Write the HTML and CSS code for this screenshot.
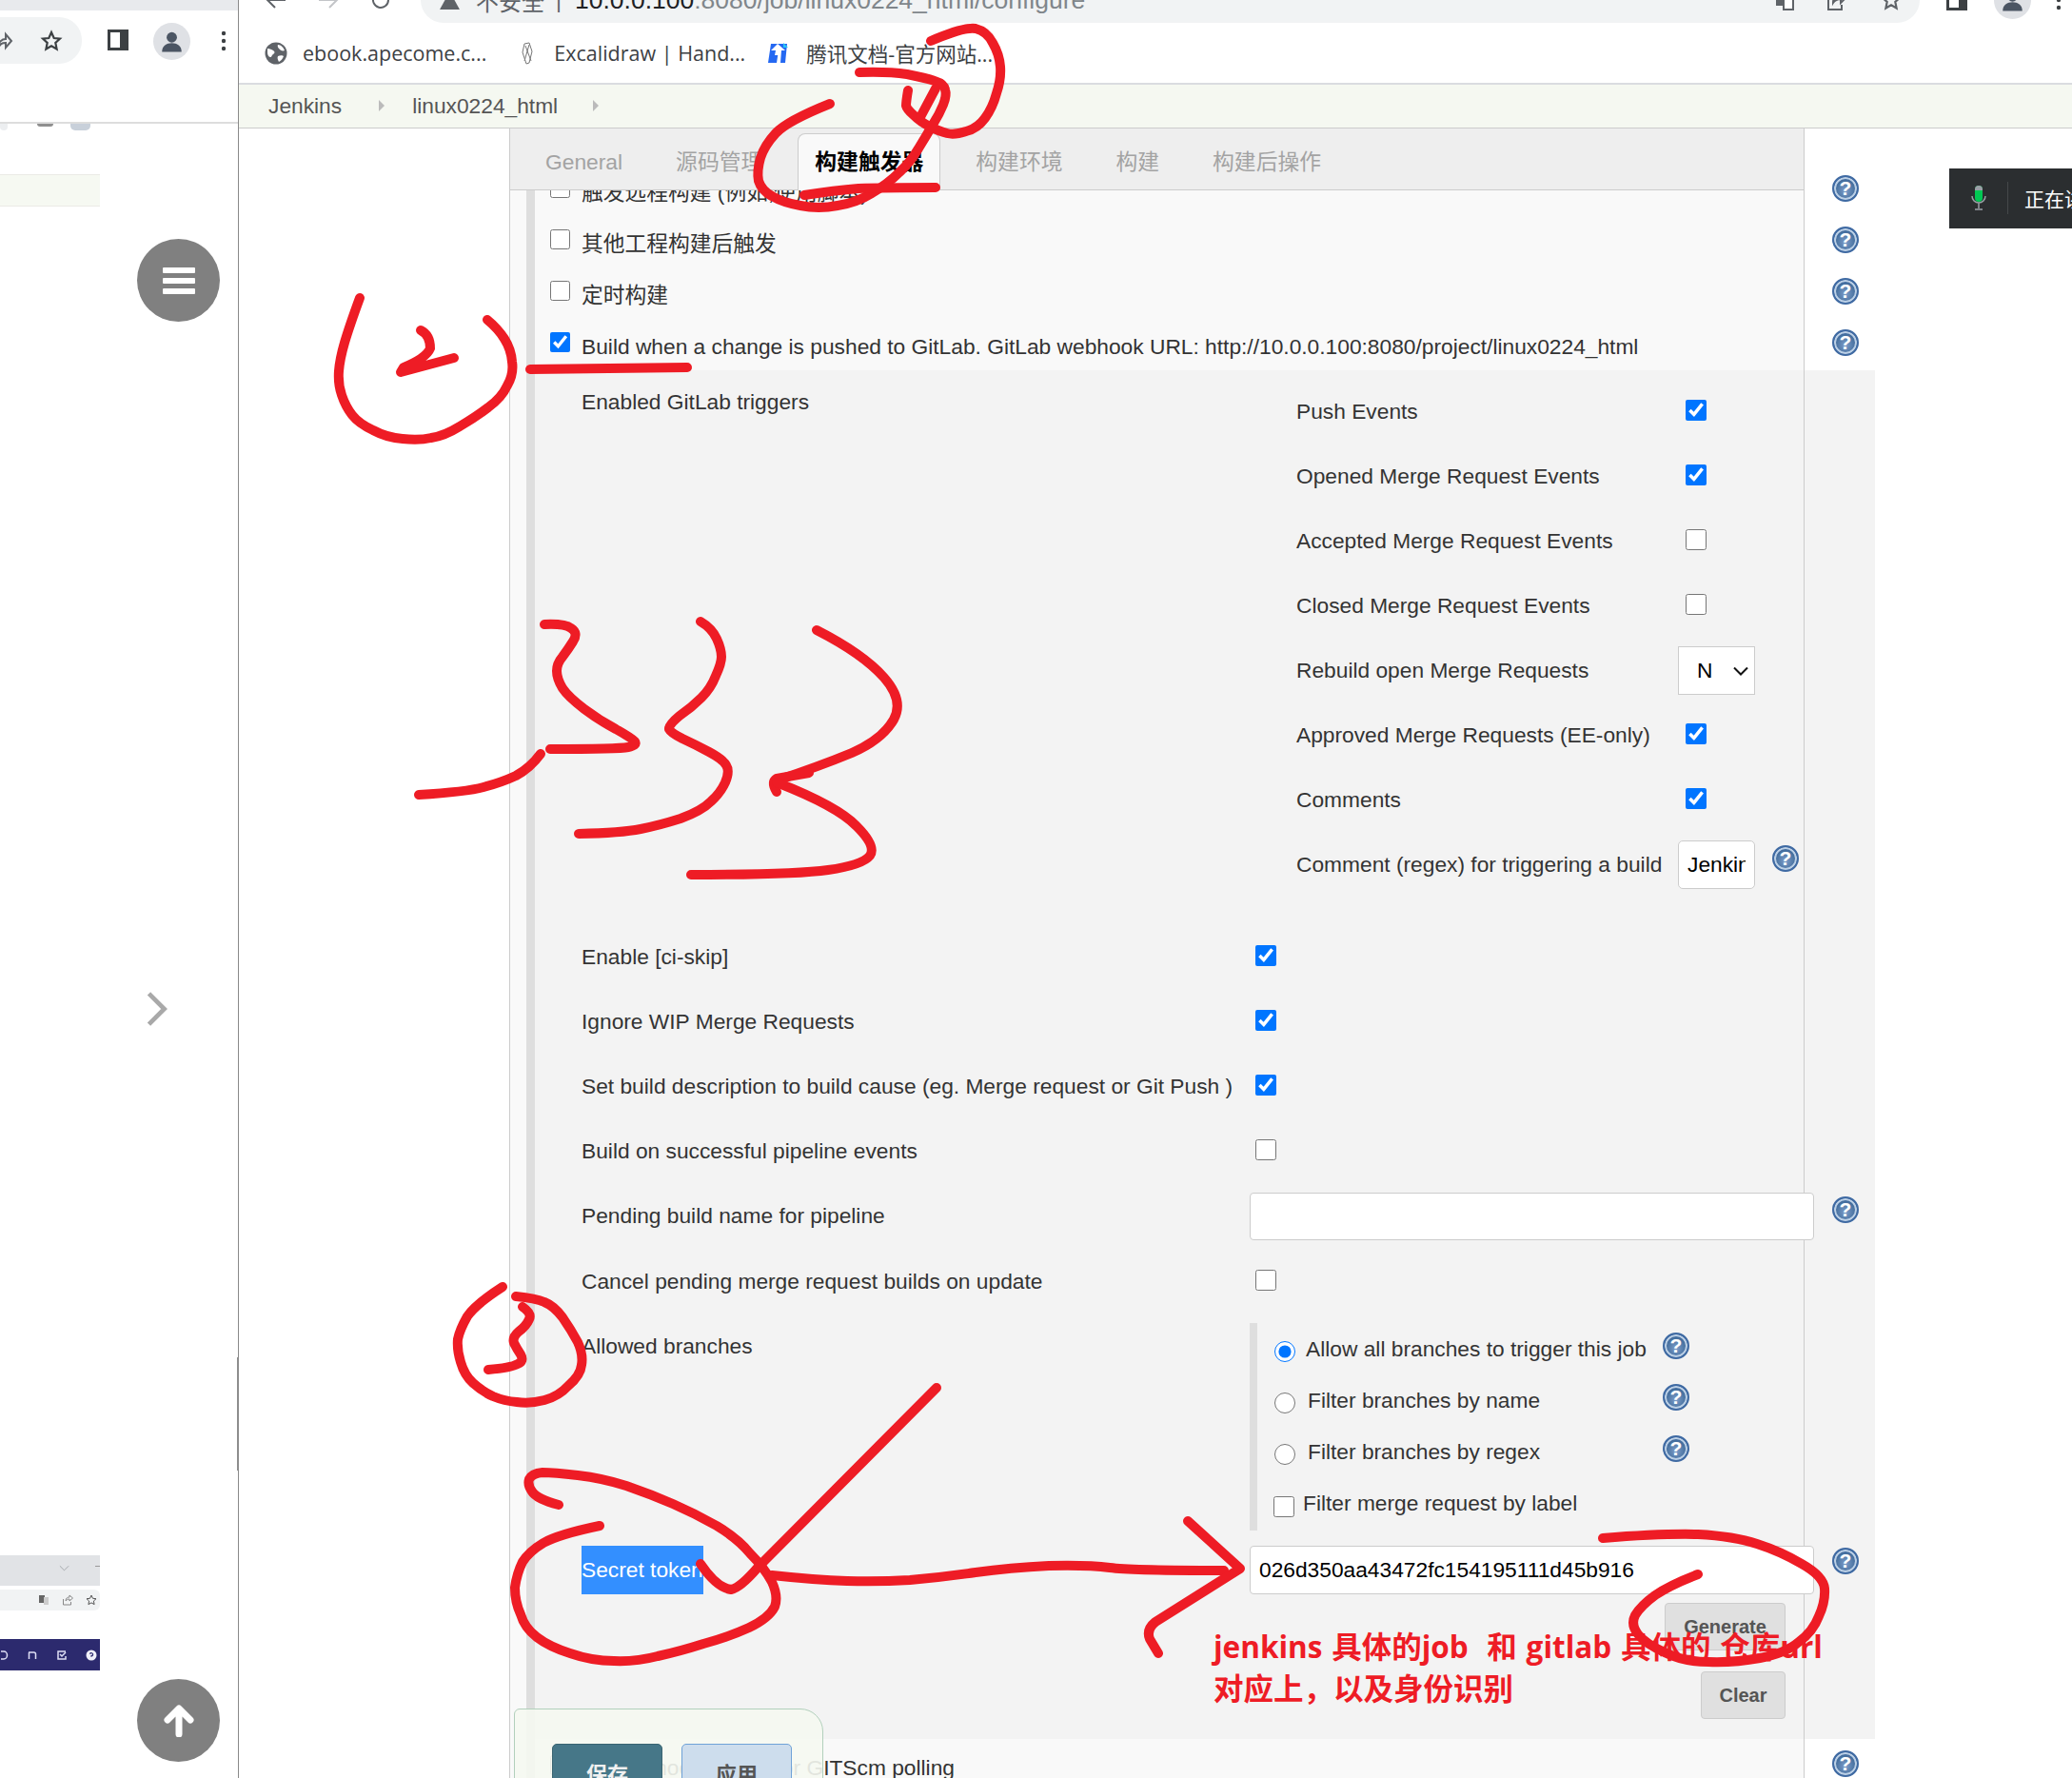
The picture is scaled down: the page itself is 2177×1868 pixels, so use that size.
FILE: index.html
```html
<!DOCTYPE html>
<html lang="zh-CN">
<head>
<meta charset="utf-8">
<title>linux0224_html Config [Jenkins]</title>
<link rel="stylesheet" href="styles.css">
</head>
<body>
<div class="page">
  <aside class="side">
    <div class="side-tabs"></div>
    <div class="side-toolbar">
      <div class="side-pill">
        <svg class="ico" viewBox="0 0 24 24"><path d="M10 20c0-7 4-10 8-10V5l6 7-6 7v-5c-4 0-6 1-8 6z" fill="none" stroke="#5f6368" stroke-width="2"/></svg>
        <svg class="ico" viewBox="0 0 24 24"><path d="M12 3l2.7 6 6.3.7-4.700 4.300 1.300 6.500L12 17.200 6.400 20.500l1.300-6.500L3 9.700 9.300 9z" fill="none" stroke="#3c4043" stroke-width="2.200"/></svg>
      </div>
      <svg class="ico side-panel-ico" viewBox="0 0 24 24"><rect x="1" y="1" width="22" height="22" fill="#3c4043"/><rect x="4" y="4" width="10" height="16" fill="#fff"/></svg>
      <span class="avatar side-avatar"><svg viewBox="0 0 24 24"><circle cx="12" cy="8.500" r="4.500" fill="#4b5563"/><path d="M3.500 21c0-5 4-7.500 8.500-7.500s8.500 2.500 8.500 7.500z" fill="#4b5563"/></svg></span>
      <svg class="dots side-dots" viewBox="0 0 6 24"><circle cx="3" cy="4" r="2.200"/><circle cx="3" cy="12" r="2.200"/><circle cx="3" cy="20" r="2.200"/></svg>
    </div>
    <div class="side-chips"><i class="chip chip--a"></i><i class="chip chip--b"></i><i class="chip chip--c"></i></div>
    <div class="side-strip"></div>
    <div class="thumb-tabs"><svg class="thumb-chev" viewBox="0 0 12 8"><path d="M1 1l5 5 5-5" fill="none" stroke="#a0a4a8" stroke-width="1"/></svg><i class="thumb-dash"></i></div>
    <div class="thumb-omni">
      <svg class="mini" viewBox="0 0 12 12"><rect x="1" y="1" width="6" height="8" fill="#666"/><rect x="6" y="3" width="5" height="8" fill="#ccc"/></svg>
      <svg class="mini" viewBox="0 0 12 12"><path d="M1.500 5v6h8V8M4 7c0-3 2-4 4-4V1l3.500 3L8 7V5C6 5 5 6 4 7z" fill="none" stroke="#888" stroke-width="1"/></svg>
      <svg class="mini" viewBox="0 0 12 12"><path d="M6 1l1.500 3.300 3.500.4-2.600 2.400.7 3.500L6 8.900 2.900 10.600l.7-3.500L1 4.700l3.500-.4z" fill="none" stroke="#555" stroke-width="1"/></svg>
    </div>
    <div class="thumb-nav">
      <svg class="mini" viewBox="0 0 12 12"><path d="M4 2h3a3.500 4 0 0 1 0 8H4" fill="none" stroke="#dfe0f5" stroke-width="1.500"/></svg>
      <svg class="mini" viewBox="0 0 12 12"><path d="M2.500 3v7M9.500 10V5a2 2 0 0 0-2-2H2" fill="none" stroke="#dfe0f5" stroke-width="1.500"/></svg>
      <svg class="mini" viewBox="0 0 12 12"><path d="M10 2H2v8h8V7M4 5l2 2 4-4" fill="none" stroke="#dfe0f5" stroke-width="1.500"/></svg>
      <svg class="mini" viewBox="0 0 12 12"><circle cx="6" cy="6" r="5.500" fill="#f0f0fa"/><path d="M4.500 4.700a1.600 1.500 0 1 1 1.500 2v1" fill="none" stroke="#2c2a6e" stroke-width="1.200"/></svg>
    </div>
    <button class="fab fab--menu" type="button" aria-label="menu"><span></span><span></span><span></span></button>
    <svg class="side-chevron" viewBox="0 0 24 40"><path d="M3 3l17 17L3 37" fill="none" stroke="#a9a9a9" stroke-width="5"/></svg>
    <button class="fab fab--up" type="button" aria-label="top"><svg viewBox="0 0 34 34"><path d="M17 31V5M5 16L17 4l12 12" fill="none" stroke="#fff" stroke-width="7" stroke-linecap="round" stroke-linejoin="round"/></svg></button>
  </aside>

  <main class="browser">
    <div class="chrome-clip">
      <div class="chrome-top">
        <svg class="ico" viewBox="0 0 24 24"><path d="M22 12H3M11 4l-8 8 8 8" fill="none" stroke="#5f6368" stroke-width="2"/></svg>
        <svg class="ico" viewBox="0 0 24 24"><path d="M2 12h19M13 4l8 8-8 8" fill="none" stroke="#c3c5c8" stroke-width="2"/></svg>
        <svg class="ico" viewBox="0 0 24 24"><path d="M20 12a8 8 0 1 1-2.500-5.800L20 9" fill="none" stroke="#5f6368" stroke-width="2"/></svg>
        <div class="omnibox">
          <svg class="warn" viewBox="0 0 22 20"><path d="M11 0l11 20H0z" fill="#5f6368"/></svg>
          <span class="insecure">不安全</span><span class="omni-sep">|</span>
          <span class="url"><b>10.0.0.100</b>:8080/job/linux0224_html/configure</span>
          <div class="omni-actions">
            <svg class="ico" viewBox="0 0 24 24"><rect x="3" y="4" width="11" height="14" fill="#5f6368"/><rect x="11" y="8" width="10" height="14" fill="#fff" stroke="#5f6368" stroke-width="2"/></svg>
            <svg class="ico" viewBox="0 0 24 24"><path d="M4 10v12h14v-5M9 15c0-6 4-8 8-8V3l6 6-6 6v-4c-4 0-6 1-8 4z" fill="none" stroke="#5f6368" stroke-width="2"/></svg>
            <svg class="ico omni-star" viewBox="0 0 24 24"><path d="M12 3l2.700 6 6.300.7-4.700 4.300 1.300 6.500L12 17.200 6.400 20.500l1.300-6.500L3 9.700 9.300 9z" fill="none" stroke="#5f6368" stroke-width="2.200"/></svg>
          </div>
        </div>
        <svg class="ico window-ico" viewBox="0 0 24 24"><rect x="1" y="1" width="22" height="22" fill="#3c4043"/><rect x="4" y="4" width="10" height="16" fill="#fff"/></svg>
        <span class="avatar top-avatar"><svg viewBox="0 0 24 24"><circle cx="12" cy="8.500" r="4.500" fill="#4b5563"/><path d="M3.500 21c0-5 4-7.500 8.500-7.500s8.500 2.500 8.500 7.500z" fill="#4b5563"/></svg></span>
        <svg class="dots top-dots" viewBox="0 0 6 24"><circle cx="3" cy="4" r="2.200"/><circle cx="3" cy="12" r="2.200"/><circle cx="3" cy="20" r="2.200"/></svg>
      </div>
    </div>
    <nav class="bookmarks">
      <a class="bookmark bookmark--ebook">
        <svg class="bm-ico" viewBox="0 0 24 24"><circle cx="12" cy="12" r="11.500" fill="#5f6368"/><path d="M3 7c3 0 4 1 6 2s2 3 0 4-1 3-3 3-3-3-3-5zM14 3c3 0 6 3 7 6-2 1-4 0-5-1s-3-3-2-5zM14 15c2-1 5-1 6 0-1 3-3 5-5 6-1-2-2-4-1-6z" fill="#fff"/></svg>
        ebook.apecome.c...</a>
      <a class="bookmark bookmark--excal">
        <svg class="bm-ico bm-ico--thin" viewBox="0 0 14 24"><path d="M4 2l5-1 3 9-3 12-3 1-4-12zM5 4l6 16M9 3L4 20" fill="none" stroke="#777" stroke-width="1"/></svg>
        Excalidraw | Hand...</a>
      <a class="bookmark bookmark--tencent">
        <svg class="bm-ico bm-ico--wide" viewBox="0 0 24 24"><path d="M5 2h17l-2 20h-5l1-13h-3l-2 13H2z" fill="#2468f2"/><path d="M12 2l-7 7h5l-1 5h5l1-5h5z" fill="#fff"/><path d="M18 1l5 5h-5z" fill="#26c6f5"/></svg>
        腾讯文档-官方网站...</a>
    </nav>
    <div class="crumbs">
      <a class="crumb crumb--root">Jenkins</a><i class="crumb-arrow crumb-arrow--a"></i>
      <a class="crumb">linux0224_html</a><i class="crumb-arrow crumb-arrow--b"></i>
    </div>

    <section class="job-box">
      <div class="tabs">
        <a class="tab tab--first">General</a>
        <a class="tab">源码管理</a>
        <a class="tab tab--active">构建触发器</a>
        <a class="tab">构建环境</a>
        <a class="tab">构建</a>
        <a class="tab">构建后操作</a>
      </div>
      <div class="form">
        <div class="trigger">
          <input class="cb cb--s" type="checkbox"><label class="trigger-label trigger-label--cjk">触发远程构建 (例如,使用脚本)</label><span class="help">?</span>
        </div>
        <div class="trigger">
          <input class="cb cb--s" type="checkbox"><label class="trigger-label trigger-label--cjk">其他工程构建后触发</label><span class="help">?</span>
        </div>
        <div class="trigger">
          <input class="cb cb--s" type="checkbox"><label class="trigger-label trigger-label--cjk">定时构建</label><span class="help">?</span>
        </div>
        <div class="trigger">
          <input class="cb cb--s" type="checkbox" checked><label class="trigger-label">Build when a change is pushed to GitLab. GitLab webhook URL: http://10.0.0.100:8080/project/linux0224_html</label><span class="help">?</span>
        </div>

        <div class="gitlab">
          <div class="events">
            <div class="events-title">Enabled GitLab triggers</div>
            <div class="events-list">
              <div class="event"><span class="event-name">Push Events</span><input class="cb" type="checkbox" checked></div>
              <div class="event"><span class="event-name">Opened Merge Request Events</span><input class="cb" type="checkbox" checked></div>
              <div class="event"><span class="event-name">Accepted Merge Request Events</span><input class="cb" type="checkbox"></div>
              <div class="event"><span class="event-name">Closed Merge Request Events</span><input class="cb" type="checkbox"></div>
              <div class="event"><span class="event-name">Rebuild open Merge Requests</span><select class="mini-select"><option>Never</option></select></div>
              <div class="event"><span class="event-name">Approved Merge Requests (EE-only)</span><input class="cb" type="checkbox" checked></div>
              <div class="event"><span class="event-name">Comments</span><input class="cb" type="checkbox" checked></div>
              <div class="event"><span class="event-name">Comment (regex) for triggering a build</span><input class="mini-input" type="text" value="Jenkins please retry a build"><span class="help help--event">?</span></div>
            </div>
          </div>

          <div class="row"><span class="row-label">Enable [ci-skip]</span><input class="cb" type="checkbox" checked></div>
          <div class="row"><span class="row-label">Ignore WIP Merge Requests</span><input class="cb" type="checkbox" checked></div>
          <div class="row"><span class="row-label">Set build description to build cause (eg. Merge request or Git Push )</span><input class="cb" type="checkbox" checked></div>
          <div class="row"><span class="row-label">Build on successful pipeline events</span><input class="cb" type="checkbox"></div>
          <div class="row row--69"><span class="row-label">Pending build name for pipeline</span><input class="wide-input wide-input--pending" type="text"><span class="help help--wide">?</span></div>
          <div class="row row--69"><span class="row-label">Cancel pending merge request builds on update</span><input class="cb" type="checkbox"></div>

          <div class="branches">
            <div class="row-label branches-title">Allowed branches</div>
            <div class="branch-box">
              <div class="branch"><input class="rb" type="radio" name="branch" checked><span>Allow all branches to trigger this job</span><span class="help help--branch">?</span></div>
              <div class="branch"><input class="rb" type="radio" name="branch"><span class="branch-pad">Filter branches by name</span><span class="help help--branch">?</span></div>
              <div class="branch"><input class="rb" type="radio" name="branch"><span class="branch-pad">Filter branches by regex</span><span class="help help--branch">?</span></div>
              <div class="branch branch--label"><input class="cb cb--branch" type="checkbox"><span>Filter merge request by label</span></div>
            </div>
          </div>

          <div class="token">
            <div class="row-label"><span class="selected">Secret token</span></div>
            <input class="wide-input wide-input--token" type="text" value="026d350aa43472fc154195111d45b916">
            <span class="help help--wide">?</span>
          </div>
          <div class="token-actions">
            <button class="btn btn--generate" type="button">Generate</button>
            <button class="btn btn--clear" type="button">Clear</button>
          </div>
        </div>

        <div class="trigger trigger--last">
          <input class="cb cb--s" type="checkbox"><label class="trigger-label">GitHub hook trigger for GITScm polling</label><span class="help">?</span>
        </div>
      </div>
    </section>
  </main>

  <div class="save-bar">
    <button class="save-btn save-btn--primary" type="button">保存</button>
    <button class="save-btn save-btn--apply" type="button">应用</button>
  </div>

  <div class="voice">
    <svg class="voice-mic" viewBox="0 0 16 26"><rect x="4" y="0" width="8" height="17" rx="4" fill="#00c853"/><path d="M4 5V4a4 4 0 0 1 8 0v1z" fill="#9aa0a6"/><path d="M1 11a7 7 0 0 0 14 0M8 18v6M4 25h8" fill="none" stroke="#9aa0a6" stroke-width="1.500"/></svg>
    <i class="voice-sep"></i>
    <span class="voice-text">正在讲话</span>
  </div>

  <svg class="ink" viewBox="0 0 2177 1868" aria-hidden="true">
    <path d="M978 43Q1013 28 1025 30Q1037 33 1043 45Q1050 57 1051 70Q1052 83 1047 98Q1043 113 1035 124Q1027 135 1015 138Q1003 142 995 140Q987 138 977 133Q967 128 960 121Q953 115 952 111Q952 107 954 95"/>
    <path d="M903 76Q933 75 953 78Q973 82 982 85Q992 88 993 94Q995 100 991 110Q987 120 980 131Q973 143 965 156Q957 170 945 181Q933 193 916 203Q900 213 880 216Q860 220 841 216Q823 213 811 206Q800 200 797 190Q795 180 799 166Q803 153 815 140Q827 127 872 109"/>
    <path d="M845 205Q877 200 902 198Q927 197 983 197"/>
    <path d="M983 93L967 123"/>
    <path d="M378 313Q367 343 362 360Q357 377 356 390Q355 403 359 415Q363 427 370 436Q377 445 392 452Q407 460 423 461Q440 463 453 460Q467 458 483 448Q500 438 513 428Q527 418 533 405Q540 393 538 380Q537 367 530 356Q523 345 512 336"/>
    <path d="M442 347Q452 352 452 366Q448 376 424 386L421 391L477 376"/>
    <path d="M557 388L722 386"/>
    <path d="M440 835Q490 832 508 827Q527 822 542 815Q557 807 568 792"/>
    <path d="M572 656Q593 655 600 660Q608 665 602 674Q597 682 591 690Q585 697 585 705Q585 713 591 723Q597 732 614 745Q630 757 647 766Q663 775 667 779Q670 783 660 785Q650 787 578 787"/>
    <path d="M736 653Q748 660 753 671Q758 682 758 690Q758 697 752 710Q747 723 737 733Q727 743 714 752Q702 762 703 766Q705 770 717 776Q730 782 745 790Q760 798 763 804Q767 810 762 822Q757 833 747 842Q737 852 715 860Q693 867 673 871Q653 875 608 876"/>
    <path d="M858 662Q907 687 929 712Q950 736 939 756Q927 777 895 791Q861 805 816 820"/>
    <path d="M816 832Q810 822 816 818L850 812"/>
    <path d="M816 822Q880 847 900 868Q921 889 914 899Q906 909 870 914Q835 919 726 919"/>
    <path d="M528 1352Q500 1370 491 1383Q483 1397 481 1407Q480 1418 484 1431Q488 1445 497 1453Q507 1462 518 1467Q530 1472 543 1473Q557 1475 572 1471Q587 1467 597 1456Q610 1445 611 1434Q613 1423 607 1410Q600 1397 591 1384Q582 1372 572 1368Q563 1364 542 1362"/>
    <path d="M549 1373Q559 1380 556 1386Q553 1393 545 1399Q538 1405 540 1411Q543 1417 547 1423Q551 1430 544 1433Q537 1437 513 1439"/>
    <path d="M587 1581Q564 1575 559 1567Q554 1560 556 1554Q559 1548 570 1547Q582 1547 607 1550Q633 1553 658 1561Q684 1570 707 1580Q730 1590 753 1603Q776 1617 788 1632Q803 1647 811 1662Q818 1677 814 1688Q808 1700 787 1710Q765 1720 739 1727Q714 1735 691 1740Q668 1746 645 1745Q622 1745 599 1737Q577 1730 564 1720Q551 1710 547 1696Q541 1683 541 1668Q543 1653 549 1641Q556 1630 571 1621Q587 1612 630 1603"/>
    <path d="M736 1643Q753 1668 768 1670Q778 1668 796 1647L984 1458"/>
    <path d="M811 1655Q857 1660 890 1661Q923 1662 956 1660Q990 1657 1025 1652Q1061 1647 1102 1645Q1143 1644 1166 1647Q1189 1650 1286 1650"/>
    <path d="M1248 1598L1303 1648L1214 1704Q1204 1712 1208 1722L1217 1737"/>
    <path d="M1684 1616Q1746 1611 1784 1612Q1822 1614 1846 1622Q1871 1630 1893 1643Q1916 1656 1917 1669Q1918 1683 1911 1698Q1905 1714 1890 1725Q1876 1737 1849 1742Q1822 1747 1795 1746Q1769 1746 1749 1736Q1729 1727 1721 1717Q1713 1707 1718 1697Q1724 1687 1739 1676Q1755 1665 1784 1654"/>
  </svg>
  <p class="ink-note">jenkins 具体的job  和 gitlab 具体的 仓库url
对应上，以及身份识别</p>
</div>
</body>
</html>
```
FILE: styles.css
```css
* { box-sizing: border-box; }
html, body { margin: 0; padding: 0; background: #fff; }
body { font-family: "Liberation Sans", "Noto Sans CJK SC", sans-serif; font-size: 22.75px; color: #333; }
.page { position: relative; width: 2177px; height: 1868px; overflow: hidden; display: grid; grid-template-columns: 251px 1fr; }
.ico { width: 24px; height: 24px; flex: none; display: block; overflow: visible; }
.dots { width: 6px; height: 24px; flex: none; fill: #3c4043; }
.avatar { width: 39px; height: 39px; border-radius: 50%; background: #dfe1e5; flex: none; display: block; padding: 5px; }
.avatar svg { display: block; }

/* left window */
.side { position: relative; border-right: 1px solid #8a8a8a; display: flex; flex-direction: column; height: 1868px; }
.side::after { content: ""; position: absolute; top: 1426px; right: -1px; width: 2px; height: 119px; background: #8d8d8d; }
.side-tabs { height: 11px; background: #e8eaed; }
.side-toolbar { height: 119px; border-bottom: 2px solid #ddd; display: flex; align-items: flex-start; padding-top: 7px; }
.side-pill { width: 86px; height: 49px; background: #f1f3f4; border-radius: 0 24px 24px 0; display: flex; align-items: center; gap: 30px; padding-right: 20px; justify-content: flex-end; }
.side-panel-ico { margin: 12px 0 0 26px; }
.side-avatar { margin: 6px 0 0 25px; }
.side-dots { margin: 13px 0 0 32px; }
.side-chips { height: 9px; position: relative; display: flex; }
.chip { display: block; height: 7px; background: #d5d8dc; border-radius: 0 0 5px 5px; }
.chip--a { width: 8px; margin-right: 31px; background: #eceef0; }
.chip--b { width: 17px; height: 3px; margin-right: 18px; background: #8f8f8f; }
.chip--c { width: 21px; background: #c8d0da; }
.side-strip { margin-top: 44px; width: 105px; height: 34px; background: #f6f9f2; border-top: 1px solid #ebebe6; border-bottom: 1px solid #ebebe6; }
.thumb-tabs { margin-top: 1417px; width: 105px; height: 32px; background: #e1e3e6; position: relative; }
.thumb-chev { position: absolute; left: 62px; top: 10px; width: 11px; height: 8px; }
.thumb-dash { position: absolute; right: 0; top: 11px; width: 5px; height: 1px; background: #999; }
.thumb-omni { margin-top: 4px; width: 105px; height: 22px; background: #f1f3f4; display: flex; align-items: center; justify-content: flex-end; gap: 13px; padding-right: 3px; border-radius: 0 6px 6px 0; }
.thumb-nav { margin-top: 30px; width: 105px; height: 33px; background: #2c2a6e; display: flex; align-items: center; justify-content: flex-end; gap: 19px; padding-right: 3px; }
.mini { width: 12px; height: 12px; flex: none; display: block; }
.fab { position: absolute; left: 144px; width: 87px; height: 87px; border-radius: 50%; border: 0; padding: 0; background: #808080; display: flex; flex-direction: column; align-items: center; justify-content: center; gap: 5px; }
.fab--menu { top: 251px; }
.fab--menu span { display: block; width: 34px; height: 6px; background: #fff; border-radius: 1px; }
.fab--up { top: 1764px; }
.fab--up svg { width: 34px; height: 34px; display: block; }
.side-chevron { position: absolute; left: 153px; top: 1041px; width: 24px; height: 38px; }

/* browser chrome */
.browser { min-width: 0; height: 1868px; overflow: hidden; }
.chrome-clip { height: 24px; overflow: hidden; }
.chrome-top { height: 48px; margin-top: -24px; display: flex; align-items: center; gap: 31px; padding-left: 27px; }
.omnibox { width: 1575px; height: 48px; flex: none; background: #f1f3f4; border-radius: 24px; display: flex; align-items: center; padding: 0 18px 0 20px; margin-left: -1px; color: #80868b; font-size: 26.5px; }
.warn { width: 21px; height: 19px; flex: none; }
.insecure { margin-left: 17px; color: #5f6368; font-size: 24px; }
.omni-sep { margin-left: 12px; color: #5f6368; font-size: 23px; }
.url { margin-left: 14px; white-space: nowrap; }
.url b { font-weight: 400; color: #202124; }
.omni-actions { margin-left: auto; display: flex; gap: 30px; }
.omni-star { margin-left: 4px; }
.window-ico { margin-left: -4px; }
.top-avatar { margin-left: -4px; }
.top-dots { margin-left: -5px; }
.bookmarks { height: 65px; border-bottom: 2px solid #dadce0; display: flex; align-items: center; padding: 0 0 0 27px; font-family: "Open Sans", "Noto Sans CJK SC", sans-serif; font-size: 21.5px; color: #3c4043; }
.bookmark { display: flex; align-items: center; white-space: nowrap; }
.bm-ico { width: 24px; height: 24px; margin-right: 16px; flex: none; }
.bm-ico--thin { width: 14px; margin-right: 21px; }
.bm-ico--wide { margin-right: 18px; }
.bookmark--excal { margin-left: 36px; }
.bookmark--tencent { margin-left: 22px; }
.crumbs { height: 46px; background: #f5f8f1; border-bottom: 1px solid #ccc; display: flex; align-items: center; padding: 0 0 1px 31px; color: #555; }
.crumb-arrow { display: block; width: 0; height: 0; border-left: 6px solid #bbb; border-top: 6px solid transparent; border-bottom: 6px solid transparent; }
.crumb-arrow--a { margin: 0 29px 0 39px; }
.crumb-arrow--b { margin-left: 37px; }

/* job box */
.job-box { margin-left: 284px; width: 1361px; height: 1734px; border-left: 1px solid #ccc; border-right: 1px solid #ccc; background: #f9f9f9; }
.tabs { position: relative; z-index: 2; height: 65px; background: #eee; border-bottom: 1px solid #ccc; display: flex; align-items: flex-end; gap: 18px; padding-left: 18px; color: #a3a3a3; font-size: 22.8px; }
.tab { height: 60px; padding: 0 18px; line-height: 58px; margin-bottom: -1px; border: 1px solid transparent; border-bottom: 0; white-space: nowrap; }
.tab--active { background: #f9f9f9; border-color: #ccc; border-radius: 8px 8px 0 0; color: #000; font-weight: 700; padding: 0 17px; }
.form { width: 1417px; margin: -27px 0 0 17px; border-left: 9px solid #dedede; }
.trigger { height: 54px; display: flex; align-items: center; padding: 0 17px 0 16px; }
.trigger-label { margin-left: 12px; padding-top: 4px; white-space: nowrap; }
.trigger-label--cjk { padding-top: 0; }
.cb { width: 22px; height: 22px; margin: 0; flex: none; }
.cb--s { width: 21px; height: 21px; margin-top: -6px; }
.help { position: relative; display: block; width: 28px; height: 28px; flex: none; border-radius: 50%; border: 2px solid #3f6aa3; background: radial-gradient(circle at 50% 60%, #7d9dc9 0, #46709f 55%, #2f5c9b 100%); box-shadow: inset 0 0 0 2px #bcd0e6; color: #fff; font-weight: 700; font-size: 21px; line-height: 24px; text-align: center; }
.trigger .help { margin: -4px 0 0 auto; }

.gitlab { background: linear-gradient(#ccc, #ccc) 1333px 0 / 1px 100% no-repeat #f3f3f3; padding-top: 9px; padding-bottom: 21px; }
.events { display: flex; margin-bottom: 29px; }
.events-title { width: 800px; padding: 9px 0 0 49px; line-height: 30px; }
.event { height: 68px; width: 600px; display: flex; align-items: center; }
.event-name { width: 401px; white-space: nowrap; }
.event .cb { margin: -3px 0 0 8px; }
.mini-select { appearance: none; width: 81px; height: 51px; margin: 0; border: 1px solid #ccc; border-radius: 0; padding: 0 44px 0 19px; font: 22.75px "Liberation Sans", sans-serif; color: #000; background: #fff url("data:image/svg+xml;utf8,<svg xmlns='http://www.w3.org/2000/svg' width='16' height='10' viewBox='0 0 16 10'><path d='M1 1.500l7 7 7-7' fill='none' stroke='%23111' stroke-width='2'/></svg>") no-repeat 57px 20px; }
.mini-input { width: 81px; height: 51px; background: #fff; border: 1px solid #ccc; border-radius: 5px; padding: 0 9px; font: 22.75px "Liberation Sans", sans-serif; color: #000; }
.help--event { margin: -12px 0 0 18px; }
.row { height: 68px; display: flex; align-items: center; padding-left: 49px; }
.row--69 { height: 69px; }
.row-label { width: 702px; flex: none; white-space: nowrap; }
.row .cb { margin: -3px 0 0 6px; }
.wide-input { width: 593px; flex: none; background: #fff; border: 1px solid #ccc; border-radius: 4px; padding: 0 9px; font: 22.75px "Liberation Sans", sans-serif; color: #000; height: 50px; position: relative; }
.help--wide { margin: -14px 0 0 19px; }
.branches { display: flex; padding-left: 49px; }
.branches-title { line-height: 66px; }
.branch-box { margin-top: 9px; width: 450px; height: 218px; border-left: 8px solid #dedede; padding: 0 0 0 18px; }
.branch { height: 54px; display: grid; grid-template-columns: 22px 364px 28px; column-gap: 11px; align-items: center; white-space: nowrap; }
.rb { width: 22px; height: 22px; margin: 6px 0 0; }
.branch-pad { padding-left: 2px; }
.help--branch { margin-top: -6px; }
.branch--label { column-gap: 9px; margin-left: -1px; grid-template-columns: 22px 1fr; }
.cb--branch { margin-top: 7px; margin-left: 0; }
.token { display: flex; align-items: flex-start; margin-top: 16px; padding-left: 49px; }
.selected { display: block; width: 128px; height: 51px; line-height: 51px; background: #338fff; color: #fff; white-space: nowrap; overflow: hidden; }
.wide-input--token { height: 51px; }
.token .help--wide { margin: 2px 0 0 19px; }
.token-actions { width: 1314px; margin-top: 9px; display: flex; flex-direction: column; align-items: flex-end; gap: 22px; }
.btn { height: 50px; border: 1px solid #ccc; border-radius: 4px; background: #e0e0e0; color: #555; font: 700 20px "Liberation Sans", sans-serif; }
.btn--generate { width: 127px; }
.btn--clear { width: 89px; }
.trigger--last { height: 60px; }
.trigger--last .trigger-label { padding-top: 0; }
.trigger--last .help { margin-top: -8px; }

/* floating bars */
.save-bar { position: absolute; z-index: 3; left: 540px; top: 1795px; width: 325px; height: 90px; background: rgba(245, 248, 241, .9); border: 1px solid #b2d0bc; border-radius: 6px 24px 0 0; display: flex; gap: 20px; padding: 36px 0 0 39px; }
.save-btn { width: 116px; height: 52px; padding: 8px 0 0; border-radius: 5px 5px 0 0; font: 700 22px "Liberation Sans", "Noto Sans CJK SC", sans-serif; }
.save-btn--primary { background: #467788; border: 1px solid #3a6572; color: #f0f0f0; }
.save-btn--apply { background: #cddded; border: 1px solid #6fa2d8; color: #555; }
.voice { position: absolute; z-index: 3; left: 2048px; top: 177px; width: 129px; height: 63px; background: #2b2e30; display: flex; align-items: center; overflow: hidden; padding: 0 0 2px 22px; color: #fff; font-size: 21px; white-space: nowrap; }
.voice-mic { width: 18px; height: 26px; flex: none; }
.voice-sep { display: block; flex: none; width: 1px; height: 34px; background: #44484a; margin: 0 17px 0 21px; }
.ink { position: absolute; z-index: 4; left: 0; top: 0; width: 2177px; height: 1868px; pointer-events: none; fill: none; stroke: #ee1c25; stroke-width: 10; stroke-linecap: round; stroke-linejoin: round; }
.ink-note { position: absolute; z-index: 5; left: 1275px; top: 1708px; margin: 0; white-space: pre; color: #ee1c25; word-spacing: 1.6px; font: 700 31.500px/44px "Open Sans", "Noto Sans CJK SC", sans-serif; }
```
